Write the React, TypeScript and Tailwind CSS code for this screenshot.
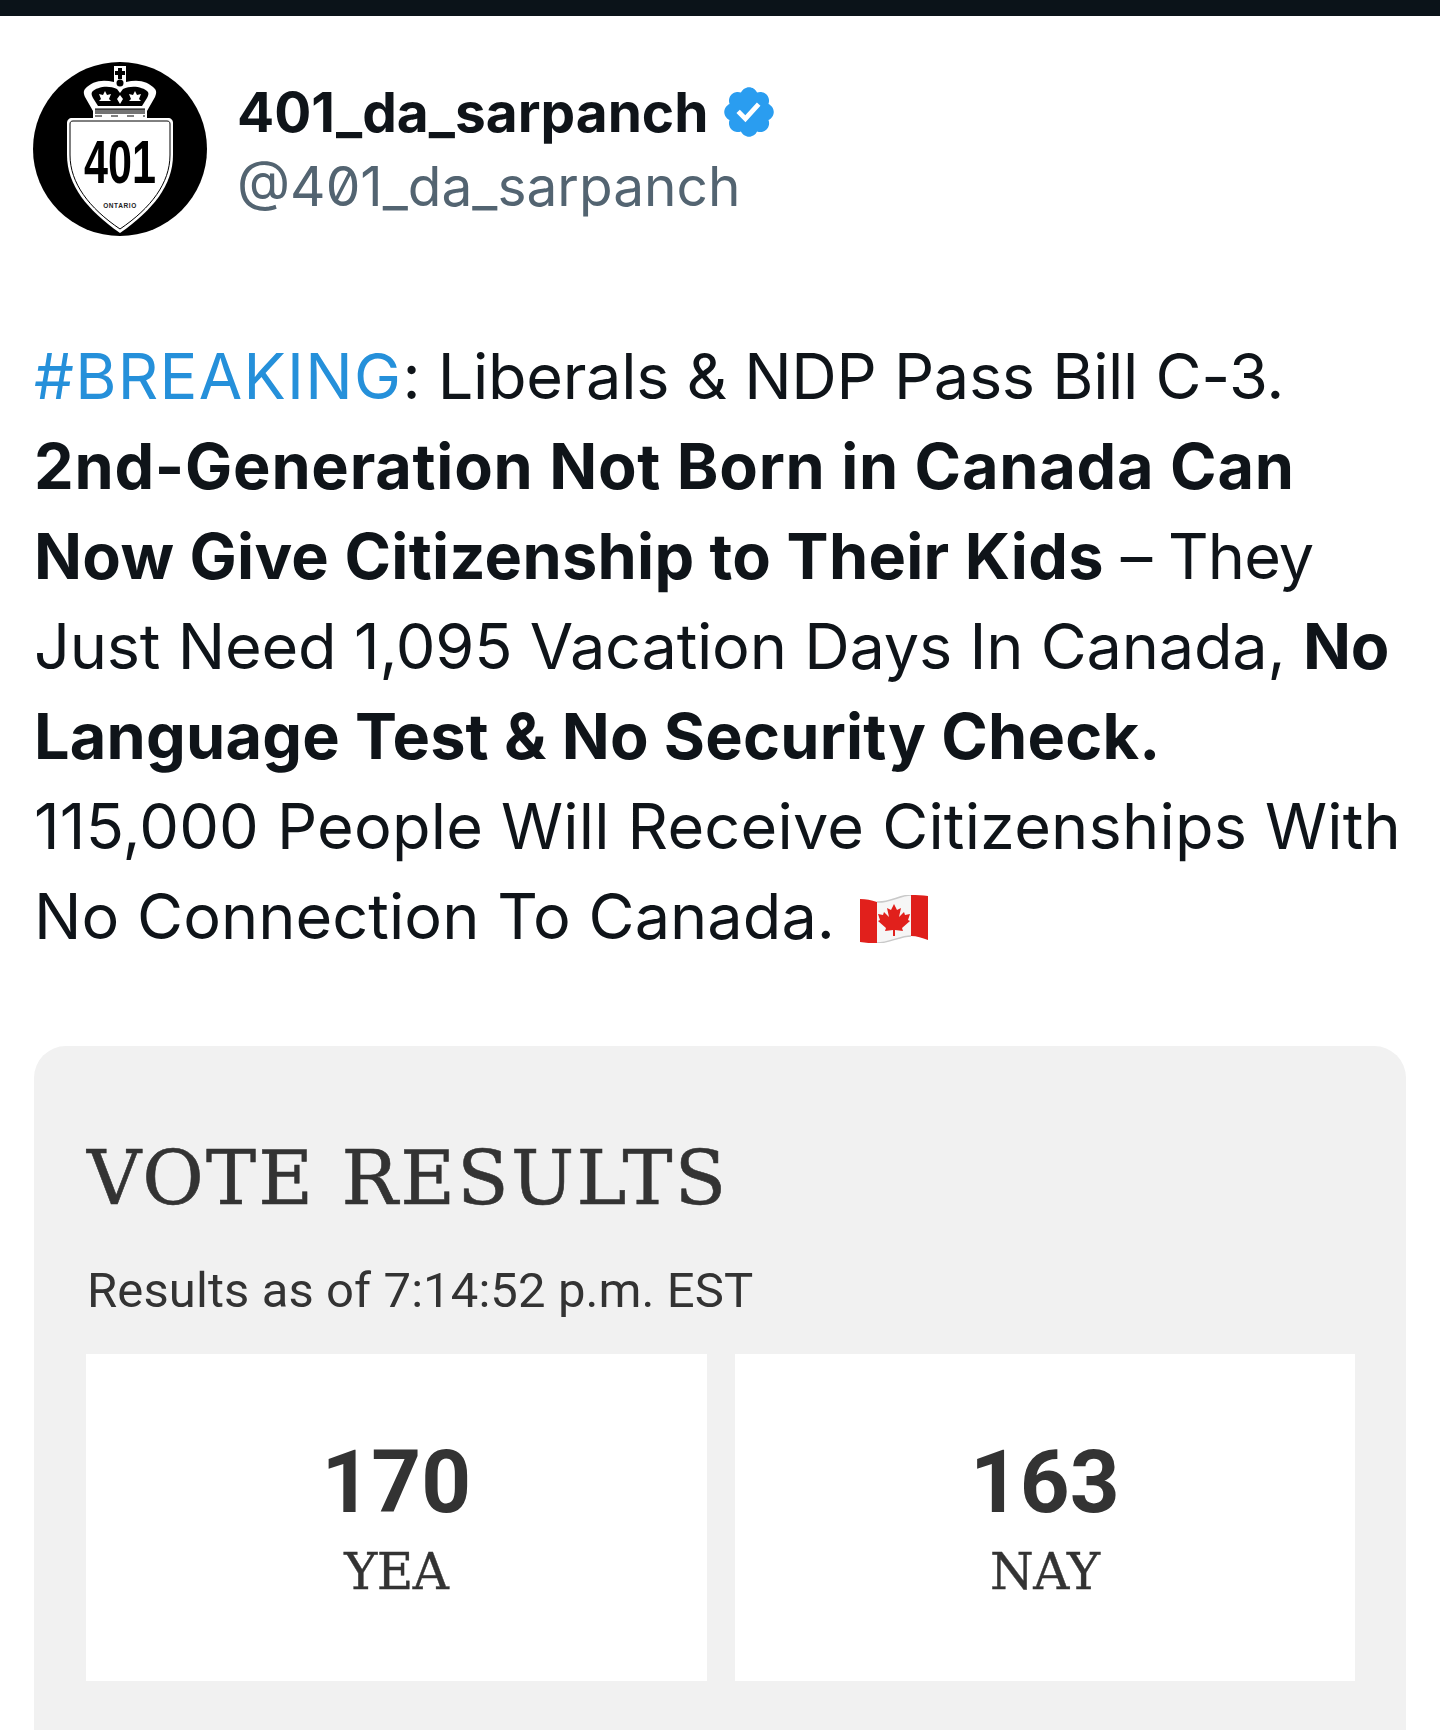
const Avatar = () => (
  <svg viewBox="0 0 174 174" className="h-[174px] w-[174px] shrink-0">
    <circle cx="87" cy="87" r="87" fill="#000" />
    {/* crown */}
    <path d="M81 4h12v16c12-3 22-1 29 7 2 3 1 5 0 8l-8 14v10H60V49l-8-14c-1-3-2-5 0-8 7-8 17-10 29-7z" fill="#fff" />
    <path d="M85 6h4v3h3v4h-3v4h-4v-4h-3V9h3z" fill="#000" />
    <circle cx="87" cy="21" r="3.5" fill="#000" />
    <path d="M59 30c5-5 16-7 25-3l3 4 3-4c9-4 20-2 25 3 1 2 0 4-1 6l-5 8H65l-5-8c-1-2-2-4-1-6z" fill="#000" />
    <path d="M72 29l2 4 4-1-2 5 2 2h-12l2-2-2-5 4 1zM102 29l2 4 4-1-2 5 2 2H96l2-2-2-5 4 1zM87 33l3 4-3 5-3-5z" fill="#fff" />
    <path d="M62 47h50v5H62z" fill="#000" opacity="0.55" />
    <path d="M62 47h50" stroke="#000" strokeWidth="1" />
    <path d="M62 54h50" stroke="#000" strokeWidth="1" strokeDasharray="7 9" />
    {/* shield */}
    <path d="M39 56h96c3 0 5 2 5 5v32c0 30-20 55-53 78-33-23-53-48-53-78V61c0-3 2-5 5-5z" fill="#fff" />
    <path d="M40 59h94c2 0 3 1 3 3v31c0 28-19 53-50 74-31-21-50-46-50-74V62c0-2 1-3 3-3z" fill="none" stroke="#000" strokeWidth="1" />
    <text x="87" y="121" textAnchor="middle" fontFamily="'Liberation Sans', sans-serif" fontWeight="700" fontSize="61" textLength="72" lengthAdjust="spacingAndGlyphs" fill="#000">401</text>
    <text x="87" y="146" textAnchor="middle" fontFamily="'Liberation Sans', sans-serif" fontWeight="700" fontSize="6.5" letterSpacing="0.6" fill="#222">ONTARIO</text>
  </svg>
);

const VerifiedBadge = () => (
  <svg viewBox="0 0 22 22" className="ml-[12px] h-[58px] w-[58px] shrink-0">
    <path
      fill="#2a9df0"
      d="M20.396 11c-.018-.646-.215-1.275-.57-1.816-.354-.54-.852-.972-1.438-1.246.223-.607.27-1.264.14-1.897-.131-.634-.437-1.218-.882-1.687-.47-.445-1.053-.75-1.687-.882-.633-.13-1.29-.083-1.897.14-.273-.587-.704-1.086-1.245-1.44S11.647 1.62 11 1.604c-.646.017-1.273.213-1.813.568s-.969.854-1.24 1.44c-.608-.223-1.267-.272-1.902-.14-.635.13-1.22.436-1.69.882-.445.47-.749 1.055-.878 1.688-.13.633-.08 1.29.144 1.896-.587.274-1.087.705-1.443 1.245-.356.54-.555 1.17-.574 1.817.02.647.218 1.276.574 1.817.356.54.856.972 1.443 1.245-.224.606-.274 1.263-.144 1.896.13.634.433 1.218.877 1.688.47.443 1.054.747 1.687.878.633.132 1.29.084 1.897-.136.274.586.705 1.084 1.246 1.439.54.354 1.17.551 1.816.569.647-.016 1.276-.213 1.817-.567s.972-.854 1.245-1.44c.604.239 1.266.296 1.903.164.636-.132 1.22-.447 1.68-.907.46-.46.776-1.044.908-1.681s.075-1.299-.165-1.903c.586-.274 1.084-.705 1.439-1.246.354-.54.551-1.17.569-1.816z"
    />
    <path fill="#fff" d="M9.662 14.85l-3.429-3.428 1.293-1.302 2.072 2.072 4.4-4.794 1.347 1.246z" />
  </svg>
);

const CanadaFlag = () => (
  <svg viewBox="0 0 68 48" className="ml-[25px] inline-block h-[48px] w-[68px] align-[-4px]">
    <path d="M0 4c6 0 11 1 17 3 12 1 23-7 34-7 6 0 11 0 17 1v44c-6-2-11-4-17-4-11 0-22 7-34 7-6 0-11 0-17-1z" fill="#f6f6f6" />
    <path d="M17 7c12 1 23-7 34-7M17 48c12 0 23-7 34-7" fill="none" stroke="#c9c9c9" strokeWidth="1.5" />
    <path d="M0 4c6 0 11 1 17 3v41c-6 0-11 0-17-1z" fill="#e1201c" />
    <path d="M51 0c6 0 11 0 17 1v44c-6-2-11-4-17-4z" fill="#df1f1b" />
    <path d="M34 9l3 6 4-2-2 9 5-5 1 3 5-1-2 6 2 1-8 7 1 3-8-1v6h-2v-6l-8 1 1-3-8-7 2-1-2-6 5 1 1-3 5 5-2-9 4 2z" fill="#e1201c" />
  </svg>
);

const ResultBox = ({ count, label }: { count: string; label: string }) => (
  <div className="flex h-[327px] flex-col items-center bg-white pt-[86px] text-[#333]">
    <div className="font-['Roboto',sans-serif] text-[87px] leading-[84px] font-bold">{count}</div>
    <div className="mt-[18px] font-['DejaVu_Serif',serif] text-[50px] leading-[60px] tracking-[-0.5px] [-webkit-text-stroke:0.4px_#333]">{label}</div>
  </div>
);

export default function App() {
  return (
    <div className="flex h-[1730px] w-[1440px] flex-col overflow-hidden bg-white font-['Inter',sans-serif] text-[#0f1419]">
      <div className="h-[16px] shrink-0 bg-[#0b1319]" />

      <header className="mt-[46px] flex items-center pl-[33px]">
        <Avatar />
        <div className="ml-[30px]">
          <div className="flex items-center text-[55px] leading-[74px] font-bold">
            401_da_sarpanch
            <VerifiedBadge />
          </div>
          <div className="text-[55px] leading-[74px] text-[#536471] [font-feature-settings:'zero']">@401_da_sarpanch</div>
        </div>
      </header>

      <div className="mt-[95px] px-[34px] text-[63px] leading-[90px]">
        <div className="tracking-[-0.3px]">
          <span className="tracking-[1.3px] text-[#2590da]">#BREAKING</span>: Liberals &amp; NDP Pass Bill C-3.
        </div>
        <div className="font-bold tracking-[0.75px]">2nd-Generation Not Born in Canada Can</div>
        <div className="tracking-[-0.9px]">
          <span className="font-bold tracking-[0.3px]">Now Give Citizenship to Their Kids</span> – They
        </div>
        <div className="tracking-[-0.2px]">
          Just Need 1,095 Vacation Days In Canada, <span className="font-bold">No</span>
        </div>
        <div className="font-bold tracking-[0.2px]">Language Test &amp; No Security Check.</div>
        <div className="tracking-[0.2px]">115,000 People Will Receive Citizenships With</div>
        <div className="tracking-[0.05px]">
          No Connection To Canada.
          <CanadaFlag />
        </div>
      </div>

      <section className="mx-[34px] mt-[85px] flex-1 rounded-t-[32px] bg-[#f1f1f1] pt-[85px] pr-[51px] pl-[52px]">
        <h2 className="pl-[1px] font-['DejaVu_Serif',serif] text-[75px] leading-[94px] tracking-[2.3px] text-[#333] [-webkit-text-stroke:0.6px_#333]">VOTE RESULTS</h2>
        <p className="mt-[36px] pl-[1px] font-['Roboto',sans-serif] text-[49px] leading-[60px] tracking-[0.1px] text-[#333]">Results as of 7:14:52 p.m. EST</p>
        <div className="mt-[33px] grid grid-cols-2 gap-[28px]">
          <ResultBox count="170" label="YEA" />
          <ResultBox count="163" label="NAY" />
        </div>
      </section>
    </div>
  );
}
